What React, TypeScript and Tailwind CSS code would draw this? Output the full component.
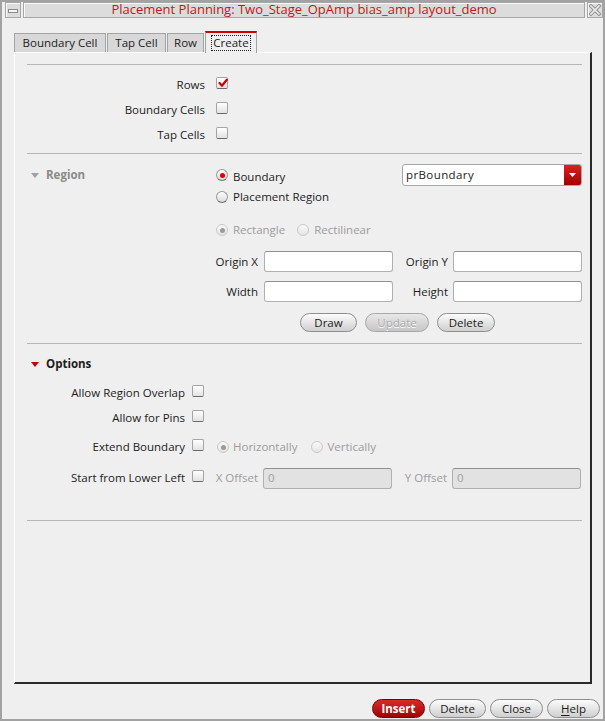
import type { ReactNode } from 'react';

const font = { fontFamily: '"Open Sans", "Noto Sans", "DejaVu Sans", sans-serif' };

function Checkbox({ checked = false }: { checked?: boolean }) {
  return (
    <span className="relative inline-block h-[12px] w-[12px] shrink-0 rounded-[2px] border border-[#a4a4a4] border-b-[#6a6a6a] bg-linear-to-b from-white to-[#e2e2e2]">
      {checked && (
        <svg className="absolute left-[1px] top-[0px]" width="10" height="10" viewBox="0 0 10 10">
          <path d="M1.5 5 L4 7.8 L8.8 1.8" fill="none" stroke="#d00000" strokeWidth="2.2" strokeLinecap="round" strokeLinejoin="round" />
        </svg>
      )}
    </span>
  );
}

function Radio({ checked = false, disabled = false }: { checked?: boolean; disabled?: boolean }) {
  return (
    <span
      className={`flex h-[12px] w-[12px] shrink-0 items-center justify-center rounded-full border bg-linear-to-b ${
        disabled ? 'border-[#c8c8c8] from-[#fafafa] to-[#e4e4e4]' : 'border-[#9a9a9a] border-b-[#707070] from-white to-[#dadada]'
      }`}
    >
      {checked && (
        <span className={`h-[5px] w-[5px] rounded-full ${disabled ? 'bg-[#9a9a9a]' : 'bg-[#e00000]'}`} />
      )}
    </span>
  );
}

function Field({ width = 'w-[129px]', disabled = false, value = '' }: { width?: string; disabled?: boolean; value?: string }) {
  return (
    <div
      className={`flex h-[21px] ${width} shrink-0 items-center rounded-[3px] border border-[#b0b0b0] border-t-[#909090] pl-[4px] text-[#a0a0a0] ${
        disabled ? 'bg-[#e2e2e2]' : 'bg-white'
      }`}
    >
      {value}
    </div>
  );
}

function PillButton({ children, width, disabled = false, primary = false }: { children: ReactNode; width: string; disabled?: boolean; primary?: boolean }) {
  const tone = primary
    ? 'border-[#780000] from-[#d82a2a] to-[#a00000] font-bold text-white'
    : disabled
      ? 'border-[#a8a8a8] from-[#e8e8e8] to-[#c6c6c6] text-[#a8a8a8] [text-shadow:0_1px_0_#fff]'
      : 'border-[#8e8e8e] from-[#fcfcfc] to-[#cfcfcf] text-[#1a1a1a]';
  return (
    <button className={`flex h-[19px] ${width} items-center justify-center rounded-full border bg-linear-to-b ${tone}`}>
      {children}
    </button>
  );
}

function Separator() {
  return <div className="h-px w-full bg-[#b6b6b6]" />;
}

function Triangle({ color }: { color: string }) {
  return (
    <svg width="8" height="5" viewBox="0 0 8 5">
      <path d="M0 0 H8 L4 5 Z" fill={color} />
    </svg>
  );
}

function CheckRow({ label, checked = false }: { label: string; checked?: boolean }) {
  return (
    <div className="flex h-[25px] items-center">
      <span className="w-[178px] text-right">{label}</span>
      <span className="ml-[11px]">
        <Checkbox checked={checked} />
      </span>
    </div>
  );
}

function OptionRow({ label, children }: { label: string; children?: ReactNode }) {
  return (
    <div className="flex h-full items-center">
      <span className="w-[158px] whitespace-nowrap text-right">{label}</span>
      <span className="ml-[7px]">
        <Checkbox />
      </span>
      {children}
    </div>
  );
}

export default function App() {
  return (
    <div style={font} className="flex h-[721px] w-[605px] flex-col border-2 border-[#a2a2a2] bg-[#efefef] text-[11.5px] text-[#1c1c1c]">
      {/* title bar */}
      <div className="flex h-[17px] items-start pl-[3px]">
        <div className="flex h-[16px] w-[16px] items-center justify-center border border-[#a6a6a6] bg-[#dcdcdc] shadow-[inset_1px_1px_0_#f8f8f8]">
          <span className="mt-[1px] h-[4px] w-[10px] border border-[#8a8a8a] bg-[#f4f4f4]" />
        </div>
        <div className="ml-[2px] flex h-[16px] flex-1 items-center justify-center border border-[#a6a6a6] bg-[#dcdcdc] text-[13px] text-[#c81414] shadow-[inset_1px_1px_0_#f8f8f8]">
          Placement Planning: Two_Stage_OpAmp bias_amp layout_demo
        </div>
        <div className="ml-[2px] flex h-[16px] w-[16px] items-center justify-center border border-[#a6a6a6] bg-[#dcdcdc] shadow-[inset_1px_1px_0_#f8f8f8]">
          <svg width="12" height="12" viewBox="0 0 12 12">
            <path d="M2 2 L10 10 M10 2 L2 10" stroke="#8c8c8c" strokeWidth="3.4" strokeLinecap="square" />
            <path d="M2 2 L10 10 M10 2 L2 10" stroke="#ededed" strokeWidth="1.6" strokeLinecap="square" />
          </svg>
        </div>
      </div>

      {/* tabs */}
      <div className="mt-[13px] flex h-[20px] items-end pl-[12px]">
        <div className="flex h-[19px] w-[92px] items-center justify-center border border-b-0 border-[#a4a4a4] bg-[#d8d8d8]">Boundary Cell</div>
        <div className="ml-px flex h-[19px] w-[59px] items-center justify-center border border-b-0 border-[#a4a4a4] bg-[#d8d8d8]">Tap Cell</div>
        <div className="ml-px flex h-[19px] w-[37px] items-center justify-center border border-b-0 border-[#a4a4a4] bg-[#d8d8d8]">Row</div>
        <div className="relative z-10 -mb-px ml-px flex h-[22px] w-[52px] items-center justify-center border-x border-[#a4a4a4] border-t-2 border-t-[#d00000] bg-[#efefef]">
          <span className="px-[1px] leading-[14px] outline outline-1 outline-dotted outline-[#222]">Create</span>
        </div>
      </div>

      {/* panel */}
      <div className="ml-[12px] mr-[11px] flex h-[632px] flex-col border-l border-t border-white border-b-2 border-r-2 border-b-[#2a2a2a] border-r-[#2a2a2a] pl-[12px] pr-[8px]">
        <div className="mt-[11px]">
          <Separator />
        </div>

        <div className="mt-[7px]">
          <CheckRow label="Rows" checked />
          <CheckRow label="Boundary Cells" />
          <CheckRow label="Tap Cells" />
        </div>

        <div className="mt-[6px]">
          <Separator />
        </div>

        {/* Region */}
        <div className="mt-[10px] flex">
          <div className="flex h-[22px] w-[173px] items-center pl-[4px] font-bold text-[#8a8a8a]">
            <Triangle color="#a0a0a0" />
            <span className="ml-[7px]">Region</span>
          </div>
          <div className="flex w-[382px] flex-col">
            <div className="flex h-[22px] items-center pl-[16px]">
              <Radio checked />
              <span className="ml-[5px] mt-[3px]">Boundary</span>
              <div className="ml-auto flex h-[22px] w-[180px] items-center rounded-[3px] border border-[#a8a8a8] bg-white">
                <span className="flex-1 pl-[3px] tracking-[0.4px]">prBoundary</span>
                <span className="flex h-[20px] w-[17px] items-center justify-center rounded-r-[2px] bg-linear-to-b from-[#dc2020] to-[#a00000]">
                  <svg width="7" height="4" viewBox="0 0 7 4">
                    <path d="M0 0 H7 L3.5 4 Z" fill="#fff" />
                  </svg>
                </span>
              </div>
            </div>
            <div className="flex h-[22px] items-center pl-[16px]">
              <Radio />
              <span className="ml-[5px]">Placement Region</span>
            </div>
            <div className="mt-[11px] flex h-[22px] items-center pl-[16px] text-[#9c9c9c]">
              <Radio checked disabled />
              <span className="ml-[5px]">Rectangle</span>
              <span className="ml-[12px]">
                <Radio disabled />
              </span>
              <span className="ml-[5px]">Rectilinear</span>
            </div>
            <div className="mt-[10px] flex h-[21px] items-center">
              <span className="w-[58px] whitespace-nowrap text-right">Origin X</span>
              <span className="ml-[6px]">
                <Field />
              </span>
              <span className="w-[55px] whitespace-nowrap text-right">Origin Y</span>
              <span className="ml-[5px]">
                <Field />
              </span>
            </div>
            <div className="mt-[9px] flex h-[21px] items-center">
              <span className="w-[58px] text-right">Width</span>
              <span className="ml-[6px]">
                <Field />
              </span>
              <span className="w-[55px] text-right">Height</span>
              <span className="ml-[5px]">
                <Field />
              </span>
            </div>
            <div className="mt-[11px] flex gap-[8px] pl-[100px]">
              <PillButton width="w-[57px]">Draw</PillButton>
              <PillButton width="w-[64px]" disabled>
                Update
              </PillButton>
              <PillButton width="w-[58px]">Delete</PillButton>
            </div>
          </div>
        </div>

        <div className="mt-[11px]">
          <Separator />
        </div>

        {/* Options */}
        <div className="mt-[10px] flex h-[20px] items-center pl-[4px] font-bold">
          <Triangle color="#c80000" />
          <span className="ml-[7px]">Options</span>
        </div>
        <div className="mt-[6px] h-[25px]">
          <OptionRow label="Allow Region Overlap" />
        </div>
        <div className="h-[25px]">
          <OptionRow label="Allow for Pins" />
        </div>
        <div className="mt-[5px] h-[24px]">
          <OptionRow label="Extend Boundary">
            <div className="ml-[13px] flex items-center text-[#9c9c9c]">
              <Radio checked disabled />
              <span className="ml-[4px]">Horizontally</span>
              <span className="ml-[14px]">
                <Radio disabled />
              </span>
              <span className="ml-[4px]">Vertically</span>
            </div>
          </OptionRow>
        </div>
        <div className="mt-[8px] h-[22px]">
          <OptionRow label="Start from Lower Left">
            <div className="flex items-center text-[#9c9c9c]">
              <span className="w-[54px] text-right">X Offset</span>
              <span className="ml-[5px]">
                <Field disabled value="0" />
              </span>
              <span className="w-[55px] text-right">Y Offset</span>
              <span className="ml-[5px]">
                <Field disabled value="0" />
              </span>
            </div>
          </OptionRow>
        </div>

        <div className="mt-[31px]">
          <Separator />
        </div>
      </div>

      {/* footer */}
      <div className="mt-[15px] flex justify-end gap-[4px] pr-[3px]">
        <PillButton width="w-[53px]" primary>
          Insert
        </PillButton>
        <PillButton width="w-[57px]">Delete</PillButton>
        <PillButton width="w-[53px]">Close</PillButton>
        <PillButton width="w-[53px]">
          <span className="underline underline-offset-2">H</span>elp
        </PillButton>
      </div>
    </div>
  );
}
